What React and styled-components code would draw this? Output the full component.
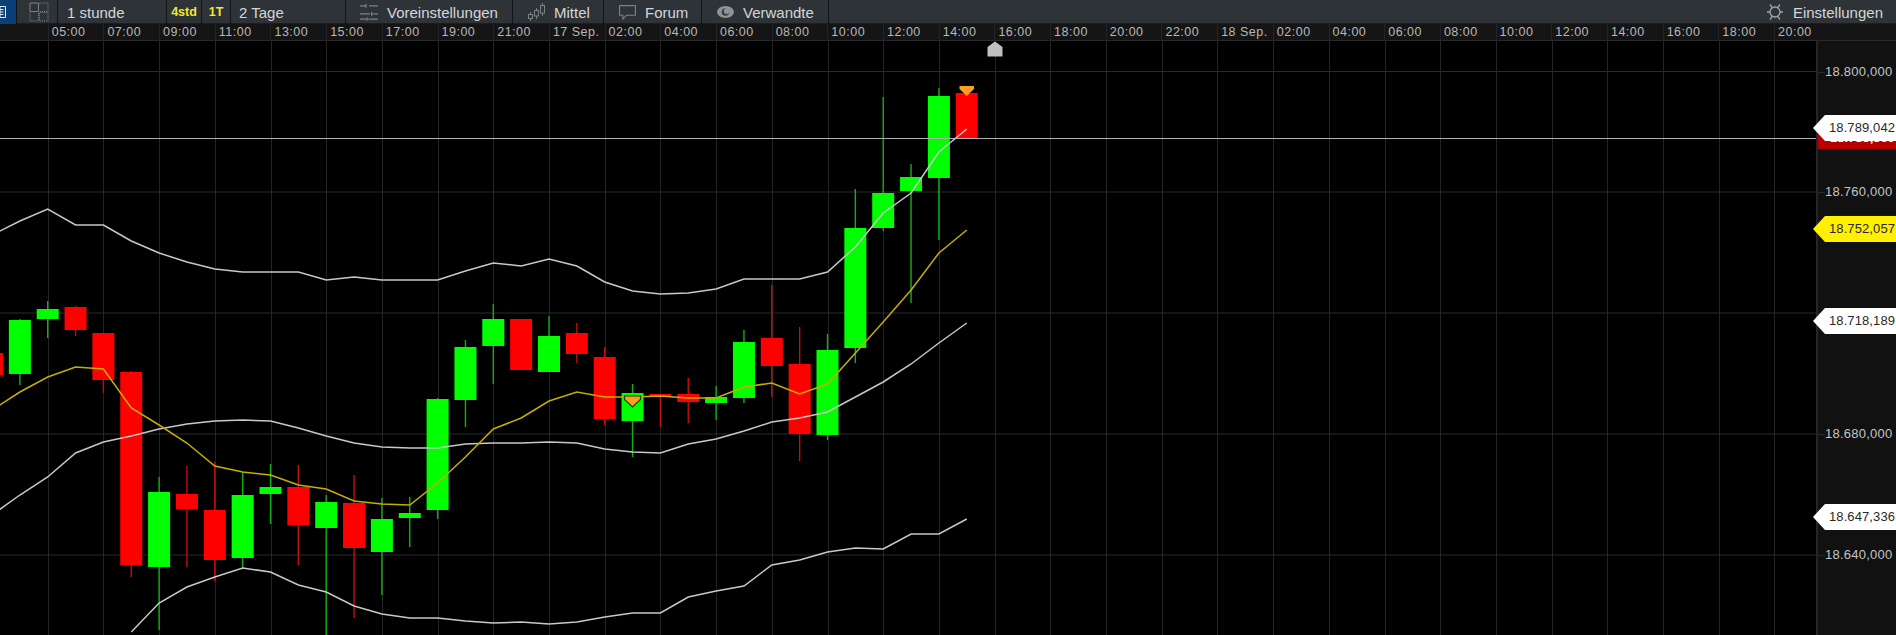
import React from 'react';
import styled, { createGlobalStyle } from 'styled-components';

const GRID_START = 47.7;
const GRID_STEP = 55.7;
const CANDLE_STEP = 27.85;
const CHART_WIDTH = 1816;
const CHART_HEIGHT = 594;
// the chart starts below the toolbar and the time axis
const TOP = 41;

const TIME_LABELS = [
  '05:00', '07:00', '09:00', '11:00', '13:00', '15:00', '17:00', '19:00', '21:00', '17 Sep.',
  '02:00', '04:00', '06:00', '08:00', '10:00', '12:00', '14:00', '16:00', '18:00', '20:00', '22:00', '18 Sep.',
  '02:00', '04:00', '06:00', '08:00', '10:00', '12:00', '14:00', '16:00', '18:00', '20:00',
];

const PRICE_LINES = [
  { y: 71.5, label: '18.800,000' },
  { y: 192, label: '18.760,000' },
  { y: 313 },
  { y: 434, label: '18.680,000' },
  { y: 555, label: '18.640,000' },
];

// k is the slot counted from the first grid line, y values are page pixels
const CANDLES = [
  [-2, 'r', 353, 375, 353, 375], [-1, 'g', 320, 374, 319, 385], [0, 'g', 309, 319, 301, 338],
  [1, 'r', 307, 330, 306, 336], [2, 'r', 333, 380, 333, 393], [3, 'r', 372, 565, 371, 577],
  [4, 'g', 492, 567, 477, 630], [5, 'r', 494, 509, 466, 567], [6, 'r', 510, 560, 462, 581],
  [7, 'g', 495, 558, 472, 568], [8, 'g', 487, 494, 464, 524], [9, 'r', 487, 525, 465, 565],
  [10, 'g', 502, 528, 495, 635], [11, 'r', 503, 548, 475, 618], [12, 'g', 519, 552, 498, 595],
  [13, 'g', 513, 518, 497, 547], [14, 'g', 399, 510, 398, 519], [15, 'g', 347, 400, 340, 427],
  [16, 'g', 319, 346, 304, 384], [17, 'r', 319, 370, 319, 370], [18, 'g', 336, 372, 316, 372],
  [19, 'r', 333, 354, 323, 363], [20, 'r', 357, 419, 347, 425], [21, 'g', 393, 421, 384, 457],
  [22, 'r', 394, 397, 394, 427], [23, 'r', 394, 402, 378, 423], [24, 'g', 397, 403, 386, 420],
  [25, 'g', 342, 398, 330, 403], [26, 'r', 338, 366, 285, 397], [27, 'r', 364, 434, 327, 461],
  [28, 'g', 350, 435, 334, 440], [29, 'g', 228, 348, 189, 363], [30, 'g', 193, 228, 97, 231],
  [31, 'g', 177, 191, 164, 303], [32, 'g', 96, 178, 88, 240], [33, 'r', 93, 138, 93, 138],
];

// values start at k = -2
const UPPER = [235, 221, 209, 225, 225, 241, 253, 262, 269, 272, 272, 272, 280, 277, 280, 280, 280, 271, 263, 266, 259, 266, 282, 291, 294, 293, 289, 279, 279, 279, 272, 247, 213, 193, 152, 129];
const MIDDLE = [515, 495, 477, 453, 442, 436, 429, 424, 421, 420, 421, 428, 436, 443, 447, 448, 448, 444, 443, 443, 442, 443, 449, 452, 453, 444, 439, 431, 422, 418, 412, 397, 382, 364, 343, 323];
const AVERAGE = [410, 392, 377, 367, 369, 408, 425, 443, 466, 472, 475, 485, 489, 501, 504, 505, 483, 457, 429, 418, 401, 392, 397, 397, 396, 398, 398, 387, 383, 394, 384, 353, 322, 290, 253, 230];
// the lower band only comes into view at k = 3
const LOWER = [632, 603, 587, 577, 568, 572, 585, 592, 606, 614, 618, 618, 621, 623, 622, 624, 622, 617, 613, 613, 597, 591, 586, 565, 560, 552, 548, 549, 534, 534, 519];

const slotX = k => GRID_START + CANDLE_STEP * k;
const chartY = y => y - TOP;
const linePoints = (values, firstSlot) =>
  values.map((y, i) => `${slotX(firstSlot + i).toFixed(1)},${chartY(y)}`).join(' ');

const GlobalStyle = createGlobalStyle`
  html, body {
    margin: 0;
    padding: 0;
    background: #000;
    overflow: hidden;
  }
  body {
    font-family: "Liberation Sans", Arial, sans-serif;
  }
`;

const Page = styled.div`
  width: 1896px;
  height: 635px;
  display: flex;
  flex-direction: column;
  overflow: hidden;
  background: #000;
`;

const Toolbar = styled.div`
  height: 24px;
  flex: none;
  display: flex;
  background: #2e3338;
  box-shadow: inset 0 -1px 0 #1b1e21;
  color: #d4d6d8;
  font-size: 15px;
`;

const ToolItem = styled.div`
  width: ${p => p.$width}px;
  flex: none;
  display: flex;
  align-items: center;
  gap: ${p => p.$gap || 9}px;
  padding-left: ${p => p.$pad || 0}px;
  box-sizing: border-box;
  border-right: 1px solid #121416;
  white-space: nowrap;
`;

const BlueButton = styled.div`
  width: 17px;
  flex: none;
  display: flex;
  align-items: center;
  background: #0b3f78;
  border-right: 1px solid #121416;
  box-sizing: border-box;
`;

const Period = styled(ToolItem)`
  color: #f2e92c;
  font-size: 12.5px;
  font-weight: bold;
  justify-content: center;
`;

const Spacer = styled.div`
  flex: 1;
`;

const SettingsItem = styled.div`
  display: flex;
  align-items: center;
  gap: 10px;
  padding-right: 13px;
`;

const TimeAxis = styled.div`
  height: 17px;
  flex: none;
  display: grid;
  grid-template-columns: repeat(32, ${GRID_STEP}px);
  padding-left: ${GRID_START}px;
  background: #151515;
  box-shadow: inset 0 -1px 0 #2a2a2a;
  color: #b8b8b8;
  font-size: 12.5px;
  letter-spacing: 0.5px;
  line-height: 16px;
`;

const TimeLabel = styled.div`
  padding-left: 3px;
  border-left: 1px solid #242424;
  white-space: nowrap;
`;

const Body = styled.div`
  flex: 1;
  display: flex;
  min-height: 0;
`;

const ChartArea = styled.svg`
  width: ${CHART_WIDTH}px;
  height: ${CHART_HEIGHT}px;
  flex: none;
  display: block;
  background: #000;
`;

const PriceAxis = styled.div`
  position: relative;
  flex: 1;
  background: #111;
  border-left: 2px solid #262626;
  box-sizing: border-box;
`;

const PriceLabel = styled.div`
  position: absolute;
  left: 7px;
  top: ${p => p.$y - TOP - 8}px;
  color: #c4c4c4;
  font-size: 13px;
  letter-spacing: 0.25px;
  line-height: 16px;
  white-space: nowrap;
`;

const PriceTick = styled.div`
  position: absolute;
  left: 0;
  top: ${p => p.$y - TOP}px;
  width: 7px;
  height: 1px;
  background: #2c2c2c;
`;

const PriceTag = styled.div`
  position: absolute;
  left: -5px;
  right: 0;
  top: ${p => p.$y - TOP}px;
  height: 26px;
  padding-left: 16px;
  box-sizing: border-box;
  background: ${p => p.$bg};
  color: #2a2a2a;
  font-size: 13px;
  letter-spacing: 0.1px;
  line-height: 26px;
  white-space: nowrap;
  overflow: hidden;
  clip-path: polygon(0 50%, 12px 0, 100% 0, 100% 100%, 12px 100%);
`;

const HiddenTag = styled.div`
  position: absolute;
  left: 0;
  right: 0;
  top: ${123 - TOP}px;
  height: 26px;
  padding-left: 12px;
  box-sizing: border-box;
  background: #b80000;
  color: #fff;
  font-size: 13px;
  font-weight: bold;
  line-height: 30px;
  white-space: nowrap;
  overflow: hidden;
`;

const ListIcon = () => (
  <svg width="6" height="14" viewBox="0 0 6 14">
    <path d="M0 1.5h5.5v11H0z" fill="none" stroke="#dfe8f2" strokeWidth="1" />
    <path d="M0 4.5h3.5M0 7h3.5M0 9.5h3.5" stroke="#dfe8f2" strokeWidth="1" />
  </svg>
);

const LayoutIcon = () => (
  <svg width="20" height="20" viewBox="0 0 20 20" fill="none">
    <path d="M1 1h8.5v8.5H1z" stroke="#7d8286" />
    <path d="M10.5 1H19v8.5h-8.5M1 10.5v8.5h8.5v-8.5M10.5 10.5H19V19h-8.5z" stroke="#7d8286" strokeDasharray="1 1" />
  </svg>
);

// rows of a thin bar with a small pointer in the gap
const SlidersIcon = () => (
  <svg width="18" height="18" viewBox="0 0 18 18" fill="#7c8185">
    <path d="M0 2.2h6v1.4H0zM9 2.2h9v1.4H9zM0 10.2h10v1.4H0zM13.5 10.2H18v1.4h-4.5zM0 15.4h6v1.4H0zM9 15.4h9v1.4H9z" />
    <path d="M6.5 .5L4 2.9L6.5 5.3zM11 8.5L13.5 10.9L11 13.3zM6.5 13.7L9 16.1L6.5 18z" />
  </svg>
);

const CandleIcon = () => (
  <svg width="17" height="18" viewBox="0 0 17 18" fill="none" stroke="#7c8185">
    <path d="M2.5 9v2.5M2.5 15.5V18M8.5 5v2.5M8.5 13v3M14.5 0v2.5M14.5 10v3" />
    <rect x="0.5" y="11.5" width="4" height="4" />
    <rect x="6.5" y="7.5" width="4" height="5.5" />
    <rect x="12.5" y="2.5" width="4" height="7.5" />
  </svg>
);

const ChatIcon = () => (
  <svg width="17" height="15" viewBox="0 0 17 15" fill="none" stroke="#7c8185" strokeWidth="1.1">
    <path d="M.6 .6h15.8v9.6H7.5l-3.6 3.8v-3.8H.6z" />
  </svg>
);

const EyeIcon = () => (
  <svg width="17" height="12" viewBox="0 0 17 12">
    <ellipse cx="8.5" cy="6" rx="8.5" ry="6" fill="#8f9498" />
    <circle cx="8.5" cy="6" r="3.8" fill="#3a3f43" />
    <circle cx="9.8" cy="5" r="2.9" fill="#8f9498" />
  </svg>
);

const GearIcon = () => (
  <svg width="16" height="18" viewBox="0 0 16 18" fill="none" stroke="#a0a3a6" strokeWidth="1.3">
    <circle cx="8" cy="9" r="5" />
    <path d="M3 1.5l2.5 3.5M13 1.5l-2.5 3.5M3 16.5l2.5-3.5M13 16.5l-2.5-3.5M0 9h3M13 9h3" />
  </svg>
);

const Candle = ({ k, color, open, close, high, low }) => {
  const x = slotX(k);
  const fill = color === 'g' ? '#00ff00' : '#ff0000';
  const wick = color === 'g' ? '#12b012' : '#c01010';
  return (
    <g>
      <line x1={x} x2={x} y1={chartY(high)} y2={chartY(low)} stroke={wick} strokeWidth="1.4" />
      <rect x={x - 11} y={chartY(open)} width="22" height={close - open} fill={fill} />
    </g>
  );
};

const Chart = () => (
  <ChartArea viewBox={`0 0 ${CHART_WIDTH} ${CHART_HEIGHT}`}>
    {TIME_LABELS.map((_, i) => {
      const x = Math.round(GRID_START + GRID_STEP * i) + 0.5;
      return <line key={i} x1={x} x2={x} y1="0" y2={CHART_HEIGHT} stroke="#242424" />;
    })}
    {PRICE_LINES.map(({ y }) => (
      <line key={y} x1="0" x2={CHART_WIDTH} y1={chartY(y)} y2={chartY(y)} stroke="#2a2a2a" />
    ))}
    <path d="M987.5 56.5H1002.5V47L995 41.5L987.5 47Z" transform={`translate(0 ${-TOP})`} fill="#c0c0c0" />
    {CANDLES.map(([k, color, open, close, high, low]) => (
      <Candle key={k} k={k} color={color} open={open} close={close} high={high} low={low} />
    ))}
    <line x1="0" x2={CHART_WIDTH} y1={chartY(138.5)} y2={chartY(138.5)} stroke="#b0b0b0" strokeWidth="1.1" />
    <polyline points={linePoints(UPPER, -2)} fill="none" stroke="#c8c8c8" strokeWidth="1.5" />
    <polyline points={linePoints(MIDDLE, -2)} fill="none" stroke="#c8c8c8" strokeWidth="1.5" />
    <polyline points={linePoints(LOWER, 3)} fill="none" stroke="#c8c8c8" strokeWidth="1.5" />
    <polyline points={linePoints(AVERAGE, -2)} fill="none" stroke="#c4ae00" strokeWidth="1.5" />
    <g transform={`translate(0 ${-TOP})`}>
      <path d="M624.5 396H640.5V399.5L632.5 407L624.5 399.5Z" fill="#ff9f1a" stroke="#1f3d10" strokeWidth="1.2" />
      <path d="M959.5 86H974V89L966.7 96L959.5 89Z" fill="#ff9f1a" />
    </g>
  </ChartArea>
);

export default function App() {
  return (
    <Page>
      <GlobalStyle />
      <Toolbar>
        <BlueButton><ListIcon /></BlueButton>
        <ToolItem $width={41} $pad={12}><LayoutIcon /></ToolItem>
        <ToolItem $width={109} $pad={9}>1 stunde</ToolItem>
        <Period $width={35}>4std</Period>
        <Period $width={29}>1T</Period>
        <ToolItem $width={115} $pad={8}>2 Tage</ToolItem>
        <ToolItem $width={167} $pad={14}><SlidersIcon />Voreinstellungen</ToolItem>
        <ToolItem $width={91} $pad={15}><CandleIcon />Mittel</ToolItem>
        <ToolItem $width={98} $pad={15}><ChatIcon />Forum</ToolItem>
        <ToolItem $width={127} $pad={15}><EyeIcon />Verwandte</ToolItem>
        <Spacer />
        <SettingsItem><GearIcon />Einstellungen</SettingsItem>
      </Toolbar>
      <TimeAxis>
        {TIME_LABELS.map((label, i) => <TimeLabel key={i}>{label}</TimeLabel>)}
      </TimeAxis>
      <Body>
        <Chart />
        <PriceAxis>
          {PRICE_LINES.map(({ y }) => <PriceTick key={y} $y={y} />)}
          {PRICE_LINES.filter(l => l.label).map(({ y, label }) => (
            <PriceLabel key={y} $y={y}>{label}</PriceLabel>
          ))}
          <HiddenTag>18.785,369</HiddenTag>
          <PriceTag $y={115} $bg="#ffffff">18.789,042</PriceTag>
          <PriceTag $y={216} $bg="#fff000">18.752,057</PriceTag>
          <PriceTag $y={308} $bg="#ffffff">18.718,189</PriceTag>
          <PriceTag $y={504} $bg="#ffffff">18.647,336</PriceTag>
        </PriceAxis>
      </Body>
    </Page>
  );
}
